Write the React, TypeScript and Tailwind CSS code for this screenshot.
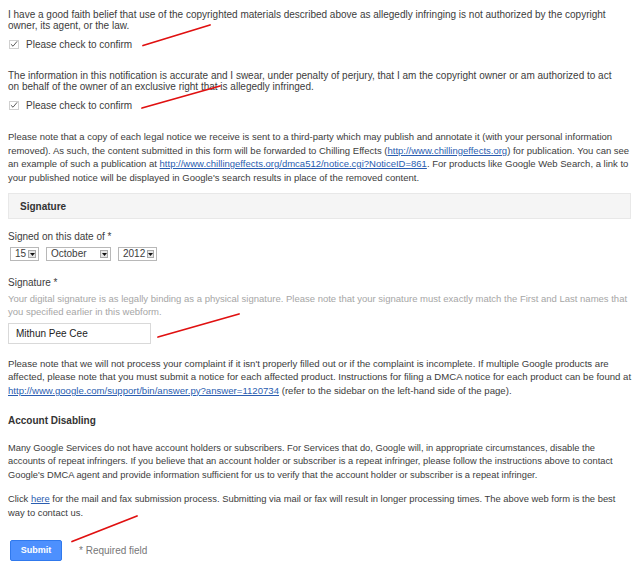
import { Fragment } from "react";

const arial = { fontFamily: '"Liberation Sans", Arial, sans-serif' };

function Check() {
  return (
    <span className="flex h-[9px] w-[10px] items-center justify-center border border-[#d0d0d0] bg-white">
      <svg width="9" height="8" viewBox="0 0 9 8">
        <path d="M1 4.2 L3.4 6.5 L8 1" fill="none" stroke="#555" strokeWidth="1.1" />
      </svg>
    </span>
  );
}

function Confirm({ className }: { className?: string }) {
  return (
    <label className={`flex h-[12px] items-center gap-[7px] pl-[1px] text-[10px] ${className ?? ""}`}>
      <Check />
      <span>Please check to confirm</span>
    </label>
  );
}

function Select({ value, width }: { value: string; width: string }) {
  return (
    <div className={`flex h-[14px] items-stretch border border-[#b8b8b8] bg-white text-[10px] ${width}`}>
      <span className="flex flex-1 items-center pl-[4px] leading-none">{value}</span>
      <span className="m-[2px] flex w-[8px] items-center justify-center border border-[#a8a8a8] bg-[#e6e6e6]">
        <svg width="5" height="3" viewBox="0 0 5 3">
          <path d="M0 0 H5 L2.5 3 Z" fill="#111" />
        </svg>
      </span>
    </div>
  );
}

function Link({ children }: { children: React.ReactNode }) {
  return <a className="text-[#2a5db0] underline">{children}</a>;
}

// the screenshot breaks lines at fixed points, so keep them
function Lines({ lines, className }: { lines: React.ReactNode[]; className: string }) {
  return (
    <p className={`whitespace-nowrap ${className}`}>
      {lines.map((l, i) => (
        <Fragment key={i}>
          {i > 0 && <br />}
          {l}
        </Fragment>
      ))}
    </p>
  );
}

export default function App() {
  return (
    <div className="relative h-[575px] w-[640px] overflow-hidden bg-white text-[#3c3c3c]" style={arial}>
      <div className="flex flex-col pl-[8px] pr-[2px] pt-[9px]">
        <Lines
          className="text-[10px] leading-[11px]"
          lines={[
            "I have a good faith belief that use of the copyrighted materials described above as allegedly infringing is not authorized by the copyright",
            "owner, its agent, or the law.",
          ]}
        />
        <Confirm className="mt-[7px]" />

        <Lines
          className="mt-[20px] text-[10px] leading-[11px]"
          lines={[
            "The information in this notification is accurate and I swear, under penalty of perjury, that I am the copyright owner or am authorized to act",
            "on behalf of the owner of an exclusive right that is allegedly infringed.",
          ]}
        />
        <Confirm className="mt-[7px]" />

        <Lines
          className="mt-[19px] text-[9.5px] leading-[13.5px]"
          lines={[
            "Please note that a copy of each legal notice we receive is sent to a third-party which may publish and annotate it (with your personal information",
            <>
              removed). As such, the content submitted in this form will be forwarded to Chilling Effects (
              <Link>http://www.chillingeffects.org</Link>) for publication. You can see
            </>,
            <>
              an example of such a publication at{" "}
              <Link>http://www.chillingeffects.org/dmca512/notice.cgi?NoticeID=861</Link>. For products like Google
              Web Search, a link to
            </>,
            "your published notice will be displayed in Google's search results in place of the removed content.",
          ]}
        />

        <div className="mr-[7px] mt-[9px] flex h-[26px] items-center border border-[#e8e8e8] bg-[#f5f5f5] px-[11px] text-[10px] font-bold text-[#333]">
          Signature
        </div>

        <p className="mt-[11px] text-[10px] leading-[13px]">Signed on this date of *</p>
        <div className="mt-[4px] flex items-center gap-[7px] pl-[2px]">
          <Select value="15" width="w-[29px]" />
          <Select value="October" width="w-[65px]" />
          <Select value="2012" width="w-[39px]" />
        </div>

        <p className="mt-[15px] text-[10px] leading-[13px]">Signature *</p>
        <Lines
          className="mt-[3px] text-[9.5px] leading-[13.3px] text-[#a6a6a6]"
          lines={[
            "Your digital signature is as legally binding as a physical signature. Please note that your signature must exactly match the First and Last names that",
            "you specified earlier in this webform.",
          ]}
        />
        <div className="mt-[4px] flex h-[21px] w-[143px] items-center border border-[#d9d9d9] bg-white pl-[7px] text-[10px] text-[#222]">
          Mithun Pee Cee
        </div>

        <Lines
          className="mt-[13px] text-[9.6px] leading-[13.5px]"
          lines={[
            "Please note that we will not process your complaint if it isn't properly filled out or if the complaint is incomplete. If multiple Google products are",
            "affected, please note that you must submit a notice for each affected product. Instructions for filing a DMCA notice for each product can be found at",
            <>
              <Link>http://www.google.com/support/bin/answer.py?answer=1120734</Link> (refer to the sidebar on the
              left-hand side of the page).
            </>,
          ]}
        />

        <h3 className="mt-[17px] text-[10px] font-bold leading-[13.5px] text-[#333]">Account Disabling</h3>

        <Lines
          className="mt-[14px] text-[9.3px] leading-[13.5px]"
          lines={[
            "Many Google Services do not have account holders or subscribers. For Services that do, Google will, in appropriate circumstances, disable the",
            "accounts of repeat infringers. If you believe that an account holder or subscriber is a repeat infringer, please follow the instructions above to contact",
            "Google's DMCA agent and provide information sufficient for us to verify that the account holder or subscriber is a repeat infringer.",
          ]}
        />

        <Lines
          className="mt-[10px] text-[9.4px] leading-[13.5px]"
          lines={[
            <>
              Click <Link>here</Link> for the mail and fax submission process. Submitting via mail or fax will result
              in longer processing times. The above web form is the best
            </>,
            "way to contact us.",
          ]}
        />

        <div className="mt-[21px] flex items-center gap-[17px] pl-[2px]">
          <button className="h-[21px] w-[52px] rounded-[2px] border border-[#3079ed] bg-[#4d90fe] text-[9px] font-bold text-white">
            Submit
          </button>
          <span className="text-[10px] text-[#777]">* Required field</span>
        </div>
      </div>

      <svg className="pointer-events-none absolute left-0 top-0" width="640" height="575">
        <g stroke="#e01010" strokeWidth="1.8" strokeLinecap="round">
          <line x1="143" y1="45.5" x2="210" y2="25" />
          <line x1="142" y1="108" x2="220" y2="86" />
          <line x1="158" y1="337" x2="239" y2="314" />
          <line x1="72" y1="541.5" x2="137" y2="516" />
        </g>
      </svg>
    </div>
  );
}
